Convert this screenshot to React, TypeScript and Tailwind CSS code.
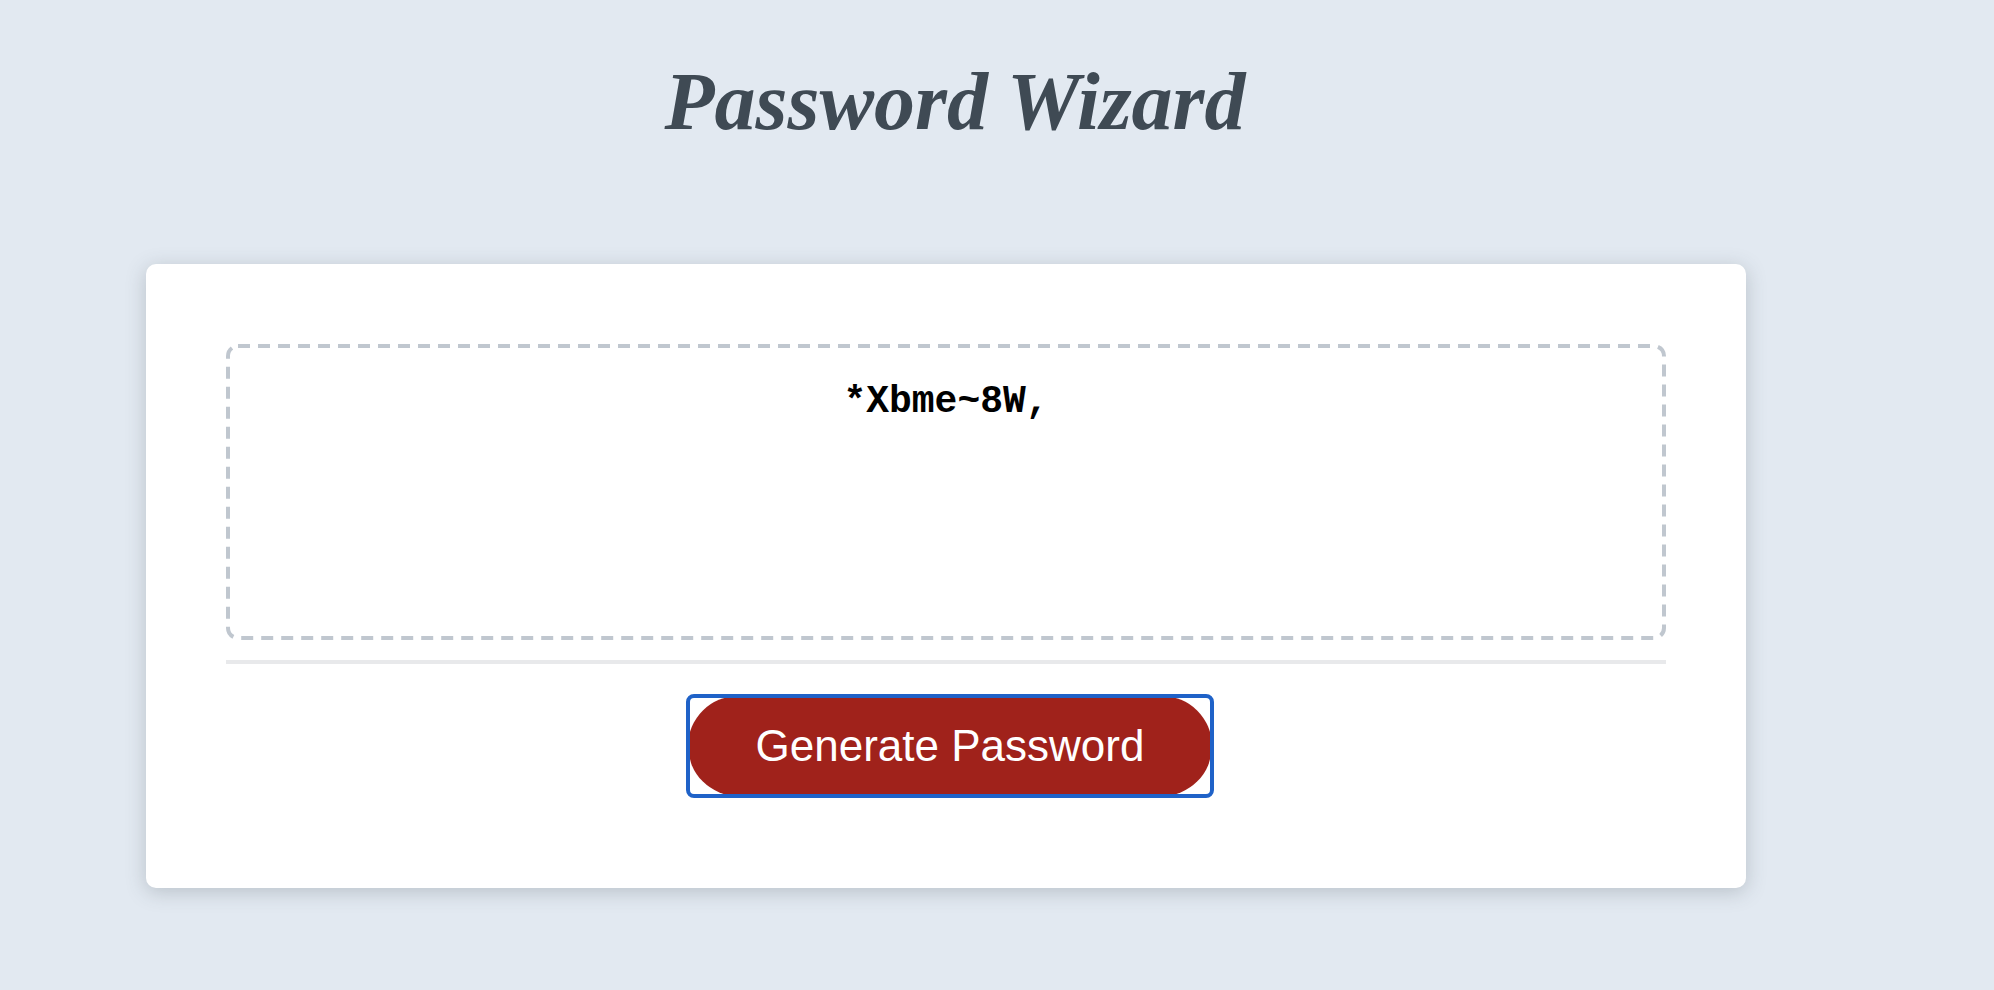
export default function App() {
  return (
    <div className="min-h-screen bg-[#e2e9f1] pb-16 text-black">
      <header className="flex h-[264px] justify-center pt-10 pr-[84px]">
        <h1 className="font-['Liberation_Serif',cursive] text-[82px] leading-[124px] font-bold text-[#3f4a54] italic">
          Password Wizard
        </h1>
      </header>
      <main className="mr-[248px] ml-[146px] flex flex-col rounded-[10px] bg-white px-20 pt-20 pb-[92px] shadow-[0_4px_20px_rgba(63,74,84,0.25)]">
        <div className="relative flex">
          <textarea
            aria-label="Your secure password"
            readOnly
            defaultValue="*Xbme~8W,"
            className="h-[296px] w-full resize-none rounded-[12px] px-5 pt-[38px] text-center font-['Liberation_Mono',monospace] text-[38px] leading-[40px] font-bold outline-none"
          />
          <svg aria-hidden="true" className="pointer-events-none absolute inset-0 size-full">
            <rect
              x="2"
              y="2"
              rx="10"
              className="h-[calc(100%-4px)] w-[calc(100%-4px)] fill-none stroke-[#c0c7cf] stroke-4 [stroke-dasharray:12_8]"
            />
          </svg>
        </div>
        <hr className="mt-5 border-0 border-t-4 border-[#e8e9eb]" />
        <button
          type="button"
          className="mt-8 ml-2 self-center rounded-[6px] bg-white outline-4 -outline-offset-2 outline-[#1f62c8]"
        >
          <span className="block rounded-[50px] bg-[#a0221b] px-[68px] font-['Liberation_Sans',sans-serif] text-[44px] leading-[100px] text-white">
            Generate Password
          </span>
        </button>
      </main>
    </div>
  );
}
